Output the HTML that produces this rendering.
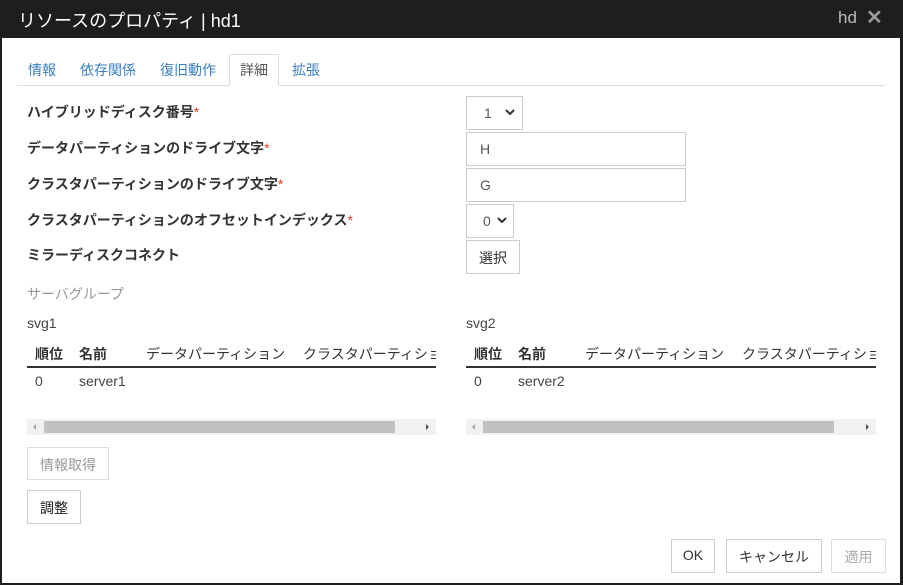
<!DOCTYPE html>
<html><head><meta charset="utf-8"><style>
*{box-sizing:border-box;margin:0;padding:0}
body{width:903px;height:585px;background:#1e1e1e;font-family:"Liberation Sans","Noto Sans CJK JP",sans-serif;position:relative;overflow:hidden;color:#333}
.a{position:absolute;white-space:nowrap}
#body{position:absolute;left:2px;top:38px;width:898px;height:545px;background:#fff}
.lbl{font-size:14px;font-weight:bold;color:#333;left:27px;line-height:20px}
.lbl b{color:#e04020;font-weight:normal}
.box{border:1px solid #ccc;background:#fff;font-size:14px;color:#555}
.tab{font-size:14px;color:#3a7fc1;top:60px;line-height:20px}
.th{font-size:14px;font-weight:bold;color:#333;top:344px}
.td{font-size:14px;color:#444;top:373px}
.sb{height:16px;background:#f1f1f1;top:419px}
.btn{border:1px solid #ccc;background:#fff;font-size:14px;text-align:center}
</style></head><body>
<div class="a" style="left:18px;top:7px;font-size:18px;color:#fff">リソースのプロパティ | hd1</div>
<div class="a" style="left:838px;top:8px;font-size:17px;color:#bbb">hd</div>
<div class="a" style="left:866px;top:5px;font-size:20px;color:#999;font-weight:bold">✕</div>
<div id="body"></div>
<div class="a" style="left:17px;top:85px;width:868px;height:1px;background:#ddd"></div>
<div class="a" style="left:229px;top:54px;width:50px;height:32px;border:1px solid #ddd;border-bottom:1px solid #fff;background:#fff"></div>
<div class="a tab" style="left:28px">情報</div>
<div class="a tab" style="left:80px">依存関係</div>
<div class="a tab" style="left:160px">復旧動作</div>
<div class="a tab" style="left:240px;color:#555">詳細</div>
<div class="a tab" style="left:292px">拡張</div>

<div class="a lbl" style="top:102px">ハイブリッドディスク番号<b>*</b></div>
<div class="a lbl" style="top:138px">データパーティションのドライブ文字<b>*</b></div>
<div class="a lbl" style="top:174px">クラスタパーティションのドライブ文字<b>*</b></div>
<div class="a lbl" style="top:210px">クラスタパーティションのオフセットインデックス<b>*</b></div>
<div class="a lbl" style="top:245px">ミラーディスクコネクト</div>

<div class="a box" style="left:466px;top:96px;width:57px;height:34px;padding:8px 0 0 17px">1</div>
<svg class="a" style="left:505px;top:108px" width="10" height="8"><path d="M1 2l4 4 4-4" stroke="#333" stroke-width="2" fill="none"/></svg>
<div class="a box" style="left:466px;top:132px;width:220px;height:34px;padding:8px 0 0 13px">H</div>
<div class="a box" style="left:466px;top:168px;width:220px;height:34px;padding:8px 0 0 13px">G</div>
<div class="a box" style="left:466px;top:204px;width:48px;height:34px;padding:8px 0 0 16px">0</div>
<svg class="a" style="left:497px;top:216px" width="10" height="8"><path d="M1 2l4 4 4-4" stroke="#333" stroke-width="2" fill="none"/></svg>
<div class="a btn" style="left:466px;top:240px;width:54px;height:34px;padding-top:7px">選択</div>

<div class="a" style="left:27px;top:284px;font-size:14px;color:#999">サーバグループ</div>
<div class="a" style="left:27px;top:315px;font-size:14px;color:#444">svg1</div>
<div class="a" style="left:466px;top:315px;font-size:14px;color:#444">svg2</div>

<div class="a" style="left:27px;top:335px;width:409px;height:60px;overflow:hidden">
<div class="a th" style="left:8px;top:9px">順位</div><div class="a th" style="left:52px;top:9px">名前</div>
<div class="a" style="left:119px;top:9px;font-size:14px;color:#333">データパーティション</div>
<div class="a" style="left:276px;top:9px;font-size:14px;color:#333">クラスタパーティション</div>
<div class="a" style="left:0;top:31px;width:409px;height:2px;background:#333"></div>
<div class="a td" style="left:8px;top:38px">0</div><div class="a td" style="left:52px;top:38px">server1</div>
</div>
<div class="a" style="left:466px;top:335px;width:410px;height:60px;overflow:hidden">
<div class="a th" style="left:8px;top:9px">順位</div><div class="a th" style="left:52px;top:9px">名前</div>
<div class="a" style="left:119px;top:9px;font-size:14px;color:#333">データパーティション</div>
<div class="a" style="left:276px;top:9px;font-size:14px;color:#333">クラスタパーティション</div>
<div class="a" style="left:0;top:31px;width:410px;height:2px;background:#333"></div>
<div class="a td" style="left:8px;top:38px">0</div><div class="a td" style="left:52px;top:38px">server2</div>
</div>

<div class="a sb" style="left:27px;width:409px"><div class="a" style="left:17px;top:2px;width:351px;height:12px;background:#c1c1c1"></div><div class="a" style="left:6px;top:5px;border:3px solid transparent;border-right-color:#aaa;border-left:0"></div><div class="a" style="left:399px;top:5px;border:3px solid transparent;border-left-color:#555;border-right:0"></div></div>
<div class="a sb" style="left:466px;width:410px"><div class="a" style="left:17px;top:2px;width:351px;height:12px;background:#c1c1c1"></div><div class="a" style="left:6px;top:5px;border:3px solid transparent;border-right-color:#aaa;border-left:0"></div><div class="a" style="left:400px;top:5px;border:3px solid transparent;border-left-color:#555;border-right:0"></div></div>

<div class="a btn" style="left:27px;top:447px;width:82px;height:33px;padding-top:7px;color:#999;border-color:#ddd">情報取得</div>
<div class="a btn" style="left:27px;top:490px;width:54px;height:34px;padding-top:7px;color:#222">調整</div>
<div class="a btn" style="left:671px;top:539px;width:44px;height:34px;padding-top:7px">OK</div>
<div class="a btn" style="left:726px;top:539px;width:96px;height:34px;padding-top:7px">キャンセル</div>
<div class="a btn" style="left:831px;top:539px;width:55px;height:34px;padding-top:7px;color:#aaa;border-color:#ddd">適用</div>
</body></html>
